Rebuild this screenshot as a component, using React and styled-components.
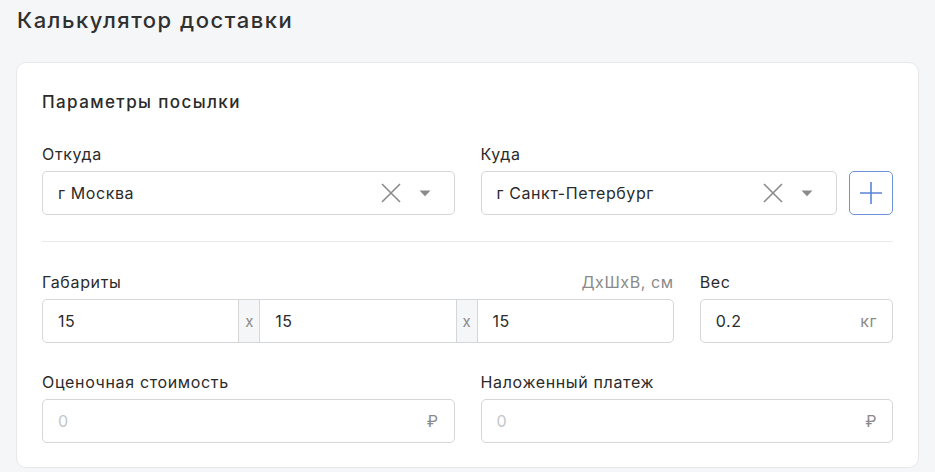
import React from "react";
import styled, { createGlobalStyle } from "styled-components";

const GlobalStyle = createGlobalStyle`
  html, body {
    margin: 0;
    padding: 0;
    background: #f5f6f8;
    font-family: Inter, "Noto Sans", sans-serif;
    color: #2b2b2b;
  }
`;

const Page = styled.div`
  padding: 3px 16px 0 16px;
`;

const Title = styled.h1`
  margin: 0 0 25px 1px;
  font-size: 22px;
  font-weight: 500;
  letter-spacing: 1.5px;
  line-height: 34px;
  color: #303030;
`;

const Card = styled.div`
  background: #fff;
  border: 1px solid #e6e8ec;
  border-radius: 10px;
  padding: 23px 25px 24px 25px;
`;

const Heading = styled.h2`
  margin: 0 0 25px 0;
  font-size: 17px;
  font-weight: 500;
  letter-spacing: 1.4px;
  line-height: 32px;
  color: #2b2b2b;
`;

const Grid = styled.div`
  display: grid;
  grid-template-columns: repeat(4, 1fr);
  column-gap: 26px;
  row-gap: 28px;
`;

const Field = styled.div`
  grid-column: span ${(p) => p.span || 1};
  display: flex;
  flex-direction: column;
  gap: 6px;
  min-width: 0;
`;

const LabelRow = styled.div`
  display: flex;
  justify-content: space-between;
  align-items: center;
  height: 22px;
`;

const Label = styled.span`
  font-size: 16px;
  letter-spacing: 0.65px;
  color: #2b2b2b;
`;

const Hint = styled.span`
  font-size: 16px;
  letter-spacing: 0.6px;
  color: #8a8a8a;
`;

const Divider = styled.hr`
  grid-column: 1 / -1;
  border: none;
  border-top: 1px solid #e8e9ec;
  margin: -2px 0 -1px 0;
`;

const InputRow = styled.div`
  display: flex;
  gap: 12px;
`;

const Box = styled.div`
  flex: ${(p) => (p.grow ? "1" : "none")};
  display: flex;
  align-items: center;
  height: 44px;
  box-sizing: border-box;
  border: 1px solid #d4d6da;
  border-radius: 5px;
  padding: 0 ${(p) => (p.select ? 23 : 15)}px 0 15px;
  font-size: 16px;
  letter-spacing: 0.6px;
  min-width: 0;
  background: #fff;
`;

const Value = styled.span`
  flex: 1;
  color: ${(p) => (p.$muted ? "#c4c6ca" : "#2b2b2b")};
`;

const Suffix = styled.span`
  color: #8a8a8a;
  font-size: 16px;
`;

const IconBtn = styled.span`
  display: flex;
  align-items: center;
  justify-content: center;
  color: #8a8a8a;
  margin-left: ${(p) => p.$gap || 0}px;
`;

const PlusButton = styled.button`
  flex: none;
  width: 44px;
  height: 44px;
  box-sizing: border-box;
  border: 1px solid #6f93d6;
  border-radius: 5px;
  background: #fff;
  display: flex;
  align-items: center;
  justify-content: center;
  padding: 0;
  color: #5b84d6;
`;

const Group = styled.div`
  display: flex;
  height: 44px;
  box-sizing: border-box;
  border: 1px solid #d4d6da;
  border-radius: 5px;
  overflow: hidden;
`;

const Segment = styled.div`
  flex: 1;
  display: flex;
  align-items: center;
  padding: 0 15px;
  font-size: 16px;
  letter-spacing: 0.6px;
  color: #2b2b2b;
`;

const Times = styled.div`
  width: 20px;
  display: flex;
  align-items: center;
  justify-content: center;
  background: #f5f6f8;
  border-left: 1px solid #d4d6da;
  border-right: 1px solid #d4d6da;
  color: #8a8a8a;
  font-size: 15px;
`;

const ClearIcon = () => (
  <svg width="22" height="22" viewBox="0 0 22 22">
    <path d="M2 2L20 20M20 2L2 20" stroke="currentColor" strokeWidth="1.6" fill="none" />
  </svg>
);

const Caret = () => (
  <svg width="12" height="8" viewBox="0 0 12 8">
    <path d="M0.5 1.5h11L6 7.2z" fill="currentColor" />
  </svg>
);

const PlusIcon = () => (
  <svg width="24" height="24" viewBox="0 0 24 24">
    <path d="M12 1v22M1 12h22" stroke="currentColor" strokeWidth="1.6" fill="none" />
  </svg>
);

const Select = ({ value, grow }) => (
  <Box grow={grow} select>
    <Value>{value}</Value>
    <IconBtn>
      <ClearIcon />
    </IconBtn>
    <IconBtn $gap={17}>
      <Caret />
    </IconBtn>
  </Box>
);

export default function App() {
  return (
    <>
      <GlobalStyle />
      <Page>
        <Title>Калькулятор доставки</Title>
        <Card>
          <Heading>Параметры посылки</Heading>
          <Grid>
            <Field span={2}>
              <LabelRow>
                <Label>Откуда</Label>
              </LabelRow>
              <Select value="г Москва" />
            </Field>
            <Field span={2}>
              <LabelRow>
                <Label>Куда</Label>
              </LabelRow>
              <InputRow>
                <Select value="г Санкт-Петербург" grow />
                <PlusButton>
                  <PlusIcon />
                </PlusButton>
              </InputRow>
            </Field>

            <Divider />

            <Field span={3}>
              <LabelRow>
                <Label>Габариты</Label>
                <Hint>ДхШхВ, см</Hint>
              </LabelRow>
              <Group>
                <Segment>15</Segment>
                <Times>x</Times>
                <Segment>15</Segment>
                <Times>x</Times>
                <Segment>15</Segment>
              </Group>
            </Field>
            <Field>
              <LabelRow>
                <Label>Вес</Label>
              </LabelRow>
              <Box>
                <Value>0.2</Value>
                <Suffix>кг</Suffix>
              </Box>
            </Field>

            <Field span={2}>
              <LabelRow>
                <Label>Оценочная стоимость</Label>
              </LabelRow>
              <Box>
                <Value $muted>0</Value>
                <Suffix>₽</Suffix>
              </Box>
            </Field>
            <Field span={2}>
              <LabelRow>
                <Label>Наложенный платеж</Label>
              </LabelRow>
              <Box>
                <Value $muted>0</Value>
                <Suffix>₽</Suffix>
              </Box>
            </Field>
          </Grid>
        </Card>
      </Page>
    </>
  );
}
